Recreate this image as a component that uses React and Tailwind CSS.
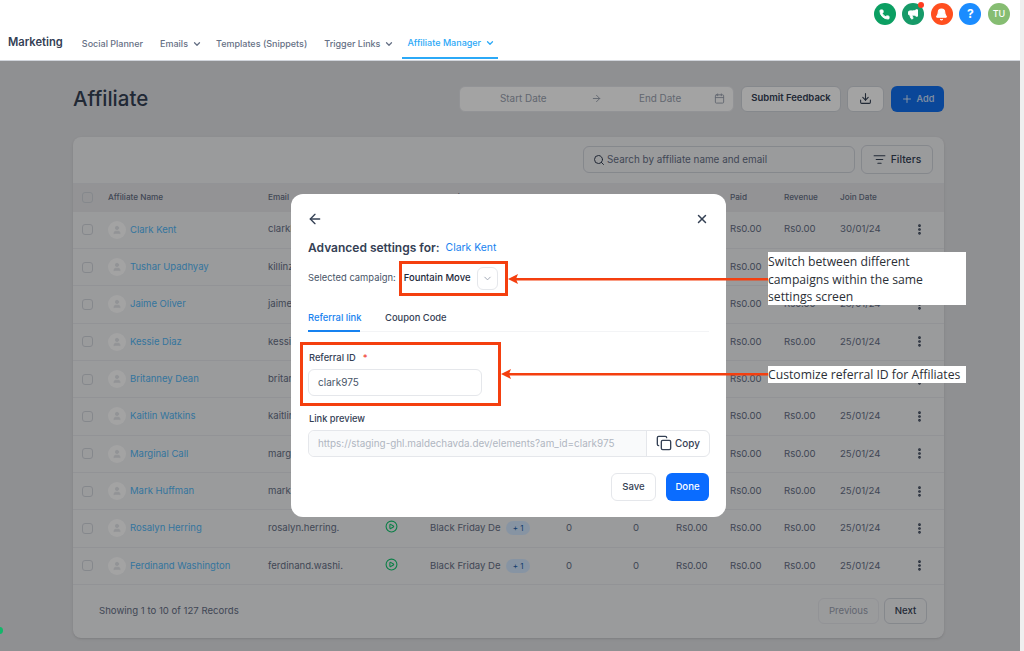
import { ArrowLeft, ArrowRight, Bell, Calendar, ChevronDown, CirclePlay, Copy, Download, EllipsisVertical, ListFilter, Megaphone, Phone, Plus, Search, User, X } from "lucide-react";

const rows = [
  { name: "Clark Kent", email: "clarkkent.", date: "30/01/24" },
  { name: "Tushar Upadhyay", email: "killinz.", date: "28/01/24" },
  { name: "Jaime Oliver", email: "jaime.", date: "28/01/24" },
  { name: "Kessie Diaz", email: "kessie.", date: "25/01/24" },
  { name: "Britanney Dean", email: "britanney.", date: "25/01/24" },
  { name: "Kaitlin Watkins", email: "kaitlin.", date: "25/01/24" },
  { name: "Marginal Call", email: "marginal.", date: "25/01/24" },
  { name: "Mark Huffman", email: "mark.", date: "25/01/24" },
  { name: "Rosalyn Herring", email: "rosalyn.herring.", date: "25/01/24" },
  { name: "Ferdinand Washington", email: "ferdinand.washi.", date: "25/01/24" },
];

const cols = "grid grid-cols-[26px_160px_117px_45px_136px_67px_43px_54px_54px_56px_73px_12px] items-center pl-[9px]";

function Nav({ label, chevron, active }) {
  return (
    <div className={`flex h-full items-center gap-[4px] px-[5px] text-[9px] font-medium ${active ? "border-b-2 border-[#2ba9f7] pr-[3px] text-[#2ba9f7]" : "text-[#667085]"}`}>
      <span>{label}</span>
      {chevron && <ChevronDown size={10} strokeWidth={3} />}
    </div>
  );
}

function TopIcon({ className, children }) {
  return <div className={`relative flex h-[22px] w-[22px] items-center justify-center rounded-full text-white ${className}`}>{children}</div>;
}

export default function App() {
  return (
    <div className="relative h-[651px] w-[1024px] overflow-hidden bg-[#e0e1e4] font-['Inter',sans-serif] text-[#344054]">
      <header className="relative h-[61px] border-b border-gray-300 bg-white">
        <div className="flex h-[29px] items-start justify-end gap-[6.6px] pr-[14px] pt-[3px]">
          <TopIcon className="bg-[#0b9f62]"><Phone size={11} fill="white" /></TopIcon>
          <TopIcon className="bg-[#169a68]">
            <Megaphone size={12} fill="white" />
            <span className="absolute right-0 top-[-1px] h-[6px] w-[6px] rounded-full bg-[#ff3b1f]" />
          </TopIcon>
          <TopIcon className="bg-[#ff4f1f]"><Bell size={13} fill="white" /></TopIcon>
          <TopIcon className="bg-[#1b8cff] text-[12px] font-bold">?</TopIcon>
          <TopIcon className="bg-[#86bd72] text-[9px] font-medium">TU</TopIcon>
        </div>
        <nav className="flex h-[30px] items-stretch pl-2">
          <div className="mr-[14px] flex items-center pb-[3px] text-[11.2px] font-semibold text-[#344054]">Marketing</div>
          <div className="mr-[7px]"><Nav label="Social Planner" /></div>
          <div className="mr-[4px]"><Nav label="Emails" chevron /></div>
          <div className="mr-[7px]"><Nav label="Templates (Snippets)" /></div>
          <div className="mr-[3px]"><Nav label="Trigger Links" chevron /></div>
          <Nav label="Affiliate Manager" chevron active />
        </nav>
      </header>

      <main className="w-[871px] translate-x-[73px]">
        <div className="flex h-[76px] items-center pb-[1px]">
          <h1 className="flex-1 pt-[1px] text-[20.5px] font-medium">Affiliate</h1>
          <div className="flex h-[26px] w-[275px] items-center rounded-md border border-gray-200 bg-white pl-10 pr-2 text-[9.9px] text-gray-400">
            <span className="w-[91px]">Start Date</span>
            <ArrowRight size={11} />
            <span className="ml-[37px] flex-1">End Date</span>
            <Calendar size={11} />
          </div>
          <button className="ml-[7px] h-[26px] w-[100px] rounded-md border border-gray-300 bg-white text-[9.5px] font-semibold">Submit Feedback</button>
          <button className="ml-[6px] flex h-[26px] w-[37px] items-center justify-center rounded-md border border-gray-300 bg-white"><Download size={13} /></button>
          <button className="ml-[7px] flex h-[26px] w-[53px] items-center justify-center gap-1 rounded-md bg-[#1070f0] text-[9.2px] font-medium text-white/80"><Plus size={12} />Add</button>
        </div>

        <section className="h-[501px] rounded-lg bg-[#f1f2f5] shadow-sm">
          <div className="flex h-[46.5px] items-center justify-end gap-[6px] border-b border-gray-200 pr-[11px]">
            <div className="flex h-[27px] w-[272px] items-center gap-[2px] rounded-md border border-gray-300 pl-[9px] text-[9.9px] text-[#667085]">
              <Search size={12} className="text-[#344054]" />Search by affiliate name and email
            </div>
            <button className="flex h-[29px] w-[72px] items-center justify-center gap-[5px] rounded-md border border-gray-300 text-[10.3px] font-medium"><ListFilter size={13} />Filters</button>
          </div>

          <div className={`${cols} h-[28px] bg-[#e6e7ea] text-[8.2px] font-medium text-[#667085]`}>
            <span className="h-[11px] w-[11px] rounded-[3px] border border-gray-300" />
            <span>Affiliate Name</span>
            <span>Email</span>
            <span>Status</span>
            <span>Campaign</span>
            <span>Customers</span>
            <span>Leads</span>
            <span>Earned</span>
            <span>Paid</span>
            <span>Revenue</span>
            <span>Join Date</span>
            <span />
          </div>

          {rows.map((row) => (
            <div key={row.name} className={`${cols} h-[37.35px] border-b border-gray-200 text-[9.6px] text-[#667085]`}>
              <span className="h-[11px] w-[11px] rounded-[3px] border border-gray-300" />
              <span className="flex items-center gap-[4px]">
                <span className="flex h-[18px] w-[18px] items-center justify-center rounded-full bg-white text-gray-200"><User size={10} fill="currentColor" /></span>
                <span className="whitespace-nowrap text-[9.5px] text-[#53b8f7]">{row.name}</span>
              </span>
              <span className="whitespace-nowrap">{row.email}</span>
              <span className="mb-[3px] text-[#12c76f]"><CirclePlay size={13} /></span>
              <span className="flex items-center gap-[5px] whitespace-nowrap">
                Black Friday De
                <span className="rounded-full bg-[#d4e8ff] px-[7px] py-[1px] text-[8px] text-[#1d5fa8]">+ 1</span>
              </span>
              <span>0</span>
              <span>0</span>
              <span>Rs0.00</span>
              <span>Rs0.00</span>
              <span>Rs0.00</span>
              <span>{row.date}</span>
              <EllipsisVertical size={13} strokeWidth={3} className="text-[#344054]" />
            </div>
          ))}

          <div className="flex h-[53px] items-center pl-[26px] pr-[17px] text-[9.6px] text-[#667085]">
            <span className="flex-1">Showing 1 to 10 of 127 Records</span>
            <button className="h-[26px] w-[61px] rounded-md border border-gray-200 text-gray-400">Previous</button>
            <button className="ml-[5px] h-[26px] w-[43px] rounded-md border border-gray-300 font-medium text-[#344054]">Next</button>
          </div>
        </section>
      </main>

      {/* dim layer */}
      <div className="absolute bottom-0 left-0 right-[4px] top-[61px] bg-black/36" />
      <div className="absolute bottom-0 right-0 top-0 w-[4px] bg-[#efefef]" />
      <div className="absolute left-[-4px] top-[627px] h-[7px] w-[7px] rounded-full bg-[#12b76a]" />

      {/* modal */}
      <div className="absolute left-[291px] top-[194px] h-[323px] w-[435px] rounded-xl bg-white px-[17px] text-[#344054]">
        <div className="flex h-[45px] items-center justify-between pb-[-1px] pt-[5px]">
          <ArrowLeft size={16} className="-ml-[1px]" />
          <X size={14} strokeWidth={2.5} />
        </div>
        <div className="flex items-center gap-[6px] text-[12px]">
          <span className="font-semibold">Advanced settings for:</span>
          <span className="text-[10.4px] text-[#1782f0]">Clark Kent</span>
        </div>
        <div className="mt-[10px] flex h-[23px] items-center text-[9.4px]">
          <span className="text-[#475467]">Selected campaign:</span>
          <span className="ml-[8px] text-[9.5px] font-medium text-[#1d2939]">Fountain Move</span>
          <span className="ml-[6px] flex h-[23px] w-[21px] items-center justify-center rounded-md border border-gray-200 text-gray-400"><ChevronDown size={11} /></span>
        </div>
        <div className="mt-[21px] flex h-[21px] gap-[25px] border-b border-gray-100 text-[9.4px]">
          <span className="h-[21px] w-[52px] whitespace-nowrap border-b-2 border-[#1782f0] font-medium text-[#1782f0]">Referral link</span>
          <span className="font-medium">Coupon Code</span>
        </div>
        <div className="mt-[19px] flex items-center gap-[7px] pl-[1px] text-[9.3px] font-medium">
          Referral ID <span className="text-[#f04438]">*</span>
        </div>
        <div className="mt-[4px] flex h-[27px] w-[174px] items-center rounded-md border border-gray-200 pl-[9px] text-[10px] text-[#475467]">clark975</div>
        <div className="mt-[16px] pl-[1px] text-[9.3px] font-medium">Link preview</div>
        <div className="mt-[4px] flex h-[27px] w-[402px] items-center rounded-md border border-gray-200 text-[9.9px]">
          <span className="flex h-full w-[338px] items-center rounded-l-md border-r border-gray-200 bg-gray-50 pl-[9px] text-[#b0b6c1]">https://staging-ghl.maldechavda.dev/elements?am_id=clark975</span>
          <span className="flex flex-1 items-center justify-center gap-[3px] font-medium"><Copy size={16} />Copy</span>
        </div>
        <div className="mt-[16px] flex justify-end gap-[10px] text-[9.6px] font-medium">
          <button className="h-[28px] w-[45px] rounded-md border border-gray-200">Save</button>
          <button className="h-[28px] w-[43px] rounded-md bg-[#0a6cff] text-white">Done</button>
        </div>
      </div>

      {/* annotations */}
      <div className="absolute left-[399px] top-[261px] h-[35px] w-[109px] border-[3px] border-[#f43f0f]" />
      <div className="absolute left-[300px] top-[342px] h-[64px] w-[201px] border-[3px] border-[#f43f0f]" />
      <svg className="absolute left-[500px] top-[270px]" width="270" height="112" viewBox="0 0 270 112" fill="#f43f0f">
        <rect x="14" y="8" width="256" height="2.5" />
        <path d="M8 9 L18 4 L16 9 L18 14 Z" />
        <rect x="7" y="103" width="263" height="2.5" />
        <path d="M1 104 L11 99 L9 104 L11 109 Z" />
      </svg>
      <div className="absolute left-[768px] top-[252px] h-[53px] w-[198px] bg-white pt-[1px] font-['Open_Sans',sans-serif] text-[12.2px] leading-[17.5px] text-[#2b2f36]">
        Switch between different campaigns within the same settings screen
      </div>
      <div className="absolute left-[768px] top-[366px] h-[17px] w-[198px] whitespace-nowrap bg-white font-['Open_Sans',sans-serif] text-[12.2px] leading-[18px] text-[#2b2f36]">
        Customize referral ID for Affiliates
      </div>
    </div>
  );
}
